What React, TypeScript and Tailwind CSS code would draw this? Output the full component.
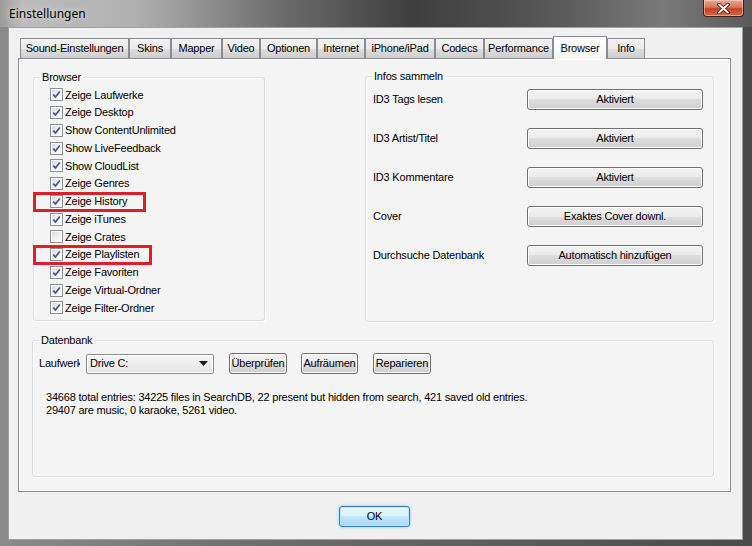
import React from "react";

const font = { fontFamily: '"Liberation Sans", Arial, sans-serif' };

function Check({ checked }: { checked: boolean }) {
  return (
    <div className="w-[13px] h-[13px] border border-[#8e8f8f] bg-white p-px shrink-0">
      <div className="w-full h-full bg-[linear-gradient(135deg,#d9dce1_0%,#f1f2f3_60%,#fbfbfb_100%)] flex items-center justify-center">
        {checked && (
          <svg width="9" height="9" viewBox="0 0 9 9">
            <path d="M1.2 4.6 L3.5 6.9 L7.8 1.4" fill="none" stroke="#41558c" strokeWidth="1.7" />
          </svg>
        )}
      </div>
    </div>
  );
}

const items: { t: string; c: boolean; box?: number }[] = [
  { t: "Zeige Laufwerke", c: true },
  { t: "Zeige Desktop", c: true },
  { t: "Show ContentUnlimited", c: true },
  { t: "Show LiveFeedback", c: true },
  { t: "Show CloudList", c: true },
  { t: "Zeige Genres", c: true },
  { t: "Zeige History", c: true, box: 113 },
  { t: "Zeige iTunes", c: true },
  { t: "Zeige Crates", c: false },
  { t: "Zeige Playlisten", c: true, box: 119 },
  { t: "Zeige Favoriten", c: true },
  { t: "Zeige Virtual-Ordner", c: true },
  { t: "Zeige Filter-Ordner", c: true },
];

const tabs: { t: string; w: number; sel?: boolean }[] = [
  { t: "Sound-Einstellungen", w: 109 },
  { t: "Skins", w: 42 },
  { t: "Mapper", w: 51 },
  { t: "Video", w: 38 },
  { t: "Optionen", w: 57 },
  { t: "Internet", w: 48 },
  { t: "iPhone/iPad", w: 70 },
  { t: "Codecs", w: 49 },
  { t: "Performance", w: 69 },
  { t: "Browser", w: 54, sel: true },
  { t: "Info", w: 38 },
];

const btn =
  "border border-[#707070] rounded-[3px] bg-[linear-gradient(to_bottom,#f2f2f2_0%,#ebebeb_50%,#dddddd_50%,#cfcfcf_100%)] shadow-[inset_0_0_0_1px_#fcfcfc] flex items-center justify-center text-[11px] text-black";

const infos = [
  ["ID3 Tags lesen", "Aktiviert"],
  ["ID3 Artist/Titel", "Aktiviert"],
  ["ID3 Kommentare", "Aktiviert"],
  ["Cover", "Exaktes Cover downl."],
  ["Durchsuche Datenbank", "Automatisch hinzufügen"],
];

const group =
  "border border-[#d5dfe5] rounded-[3px] shadow-[inset_1px_1px_0_#ffffff,1px_1px_0_#ffffff]";

export default function App() {
  return (
    <div
      className="w-[752px] h-[546px] flex flex-col bg-[linear-gradient(to_right,#8a8a8a_0%,#6a6a6a_40%,#4a4a4a_100%)] overflow-hidden"
      style={font}
    >
      {/* title bar */}
      <div className="h-[27px] flex items-start justify-between bg-[linear-gradient(to_right,#9c9c9c_0%,#bdbdbd_3%,#b0b0b0_18%,#6a6a6a_38%,#3e3e3e_55%,#5a5a5a_75%,#7a7a7a_88%,#5a5a5a_100%)]">
        <div
          className="pl-[9px] pt-[5px] text-[12px] text-black"
          style={{ fontFamily: '"Noto Sans", "Liberation Sans", sans-serif', textShadow: "0 0 6px rgba(255,255,255,0.8)" }}
        >
          Einstellungen
        </div>
        <div className="mr-[8px] w-[41px] h-[17px] rounded-b-[4px] border border-t-0 border-[#4a1a14] bg-[linear-gradient(to_bottom,#e9a896_0%,#d8745c_45%,#c2401f_55%,#d46a4c_100%)] flex items-center justify-center shadow-[inset_0_0_0_1px_rgba(255,220,210,0.5)]">
          <svg width="13" height="11" viewBox="0 0 13 11">
            <path d="M2 1.5 L11 9.5 M11 1.5 L2 9.5" stroke="#3a1510" strokeWidth="3.6" strokeLinecap="round" />
            <path d="M2 1.5 L11 9.5 M11 1.5 L2 9.5" stroke="#ffffff" strokeWidth="2" strokeLinecap="round" />
          </svg>
        </div>
      </div>

      {/* client */}
      <div className="ml-[8px] mr-[9px] mb-[6px] flex-1 bg-[#f0f0f0] border border-[#a0a0a0] flex flex-col pl-[9px] pr-[11px] pt-[8px] text-[11px] tracking-[-0.2px] text-black">
        {/* tabs */}
        <div className="flex items-end ml-[2px] h-[22px] relative z-10">
          {tabs.map((tb) =>
            tb.sel ? (
              <div
                key={tb.t}
                style={{ width: tb.w }}
                className="h-[23px] -mb-px border border-b-0 border-[#898c95] bg-[linear-gradient(to_bottom,#ffffff,#f4f4f4)] flex items-start justify-center pt-[3px]"
              >
                {tb.t}
              </div>
            ) : (
              <div
                key={tb.t}
                style={{ width: tb.w }}
                className="h-[20px] border border-b-0 border-[#898c95] bg-[linear-gradient(to_bottom,#f2f2f2_0%,#ebebeb_50%,#dddddd_50%,#cfcfcf_100%)] flex items-center justify-center"
              >
                {tb.t}
              </div>
            )
          )}
        </div>

        {/* panel */}
        <div className="h-[434px] border border-[#898c95] bg-[#f4f4f4] shadow-[inset_1px_1px_0_#ffffff,inset_-1px_-1px_0_#ffffff] flex flex-col pl-[14px] pr-[16px] pt-[12px]">
          <div className="flex items-start">
            {/* Browser group */}
            <fieldset className={`${group} w-[232px] h-[250px] pl-[6px]`}>
              <legend className="px-[2px] leading-[13px] text-[11px]">Browser</legend>
              <div className="pt-[2px] pl-[10px] flex flex-col">
                {items.map((it) => (
                  <div key={it.t} className="h-[17.75px] flex items-center gap-[2px] relative">
                    <Check checked={it.c} />
                    <span className="whitespace-nowrap">{it.t}</span>
                    {it.box && (
                      <div
                        className="absolute left-[-17px] top-[-1px] h-[20px] border-[3px] border-[#dc2027]"
                        style={{ width: it.box }}
                      />
                    )}
                  </div>
                ))}
              </div>
            </fieldset>

            {/* Infos group */}
            <fieldset className={`${group} ml-[100px] -mt-px w-[349px] h-[252px] pl-[6px]`}>
              <legend className="px-[2px] leading-[13px] text-[11px]">Infos sammeln</legend>
              <div className="pt-[6px] pl-[1px] pr-[10px] flex flex-col gap-[18px]">
                {infos.map(([l, b]) => (
                  <div key={l} className="h-[21px] flex items-center">
                    <span className="w-[154px] whitespace-nowrap">{l}</span>
                    <div className={`${btn} w-[176px] h-[21px]`}>{b}</div>
                  </div>
                ))}
              </div>
            </fieldset>
          </div>

          {/* Datenbank group */}
          <fieldset className={`${group} -ml-px mt-[12px] w-[682px] h-[143px] pl-[6px]`}>
            <legend className="px-[2px] leading-[13px] text-[11px]">Datenbank</legend>
            <div className="pt-[6px] flex items-center h-[27px]">
              <span className="w-[41px] overflow-hidden whitespace-nowrap">Laufwerk</span>
              <div className="ml-[6px] w-[128px] h-[20px] border border-[#8d8d8d] rounded-[2px] bg-[linear-gradient(to_bottom,#f6f6f6,#e5e5e5)] shadow-[inset_0_0_0_1px_#ffffff] flex items-center justify-between pl-[3px] pr-[5px]">
                <span>Drive C:</span>
                <svg width="9" height="5" viewBox="0 0 9 5">
                  <path d="M0 0 H9 L4.5 5 Z" fill="#1a1a1a" />
                </svg>
              </div>
              <div className={`${btn} ml-[15px] w-[58px] h-[21px]`}>Überprüfen</div>
              <div className={`${btn} ml-[14px] w-[57px] h-[21px]`}>Aufräumen</div>
              <div className={`${btn} ml-[15px] w-[58px] h-[21px]`}>Reparieren</div>
            </div>
            <div className="pl-[7px] pt-[17px] leading-[13px]">
              <div>34668 total entries: 34225 files in SearchDB, 22 present but hidden from search, 421 saved old entries.</div>
              <div>29407 are music, 0 karaoke, 5261 video.</div>
            </div>
          </fieldset>
        </div>

        {/* OK */}
        <div className="flex justify-center mt-[14px]">
          <div className="w-[71px] h-[21px] border border-[#3c7fb1] rounded-[3px] bg-[linear-gradient(to_bottom,#eaf6fd_0%,#d9f0fc_50%,#bee6fd_50%,#a7d9f5_100%)] shadow-[inset_0_0_0_1px_#b8e4fa,0_0_3px_#6ac4f0] flex items-center justify-center">
            OK
          </div>
        </div>
      </div>
    </div>
  );
}
